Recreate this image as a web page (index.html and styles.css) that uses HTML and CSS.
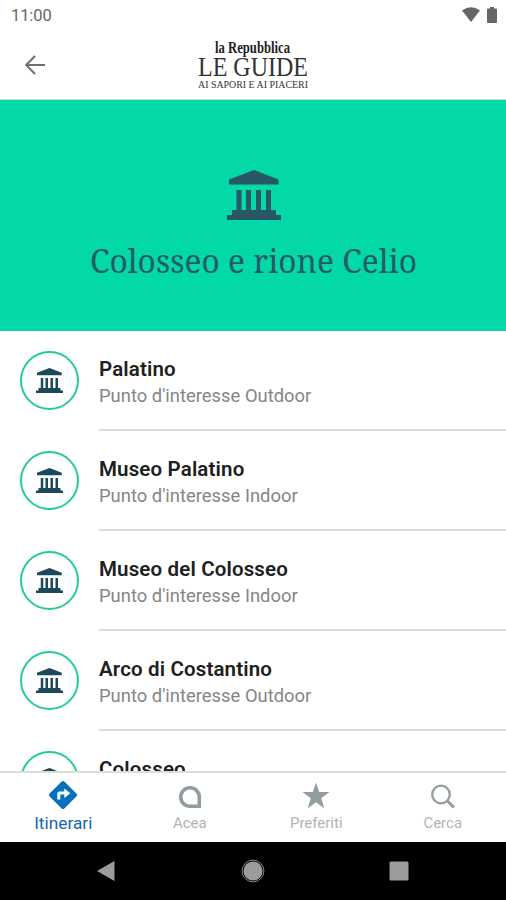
FILE: index.html
```html
<!DOCTYPE html>
<html lang="it">
<head>
  <meta charset="UTF-8" />
  <meta name="viewport" content="width=device-width, initial-scale=1.0"/>
  <title>Le Guide - Itinerari</title>
  <link rel="stylesheet" href="styles.css">
</head>
<body>
  <svg class="defs" width="0" height="0">
    <symbol id="museum" viewBox="0 0 54 50">
      <path d="M27 0L51.500 9.500V14.500H2V9.500ZM9.500 20h5v20h4.500V20h5v20h5V20h5v20h5V20h5v20h5v5h5v5H0v-5h5v-5h4.500Z"/>
    </symbol>
  </svg>

  <div class="screen">
    <!-- Status bar -->
    <div class="status">
      <span class="time">11:00</span>
      <div class="status-icons">
        <svg width="18" height="15" viewBox="0 0 18 15"><path d="M0 3.500Q9-3 18 3.500L9 15Z"/></svg>
        <svg width="10" height="16" viewBox="0 0 10 16"><path d="M3 0h4v1.500h2q1 0 1 1V15q0 1-1 1H1q-1 0-1-1V2.500q0-1 1-1h2Z"/></svg>
      </div>
    </div>

    <!-- Header -->
    <header class="header">
      <svg class="back" width="20" height="20" viewBox="0 0 20 20"><path d="M20 10H1.500M10 1L1.200 10L10 19"/></svg>
      <svg class="logo" width="112" height="56" viewBox="0 0 112 56">
        <text class="logo-paper" x="18" y="14.500" textLength="75" lengthAdjust="spacingAndGlyphs">la Repubblica</text>
        <text class="logo-name" x="1" y="38" textLength="110" lengthAdjust="spacingAndGlyphs">LE GUIDE</text>
        <text class="logo-sub" x="1" y="49.500" textLength="110" lengthAdjust="spacingAndGlyphs">AI SAPORI E AI PIACERI</text>
      </svg>
    </header>

    <!-- Itinerary title -->
    <div class="hero">
      <svg class="hero-icon"><use href="#museum"/></svg>
      <svg class="hero-title" width="332" height="50" viewBox="0 0 332 50">
        <text x="3" y="35" textLength="327" lengthAdjust="spacingAndGlyphs">Colosseo e rione Celio</text>
      </svg>
    </div>

    <!-- Places -->
    <div class="list">
      <div class="item">
        <div class="circle"><svg><use href="#museum"/></svg></div>
        <div class="info"><h2>Palatino</h2><p>Punto d'interesse Outdoor</p></div>
      </div>
      <div class="item">
        <div class="circle"><svg><use href="#museum"/></svg></div>
        <div class="info"><h2>Museo Palatino</h2><p>Punto d'interesse Indoor</p></div>
      </div>
      <div class="item">
        <div class="circle"><svg><use href="#museum"/></svg></div>
        <div class="info"><h2>Museo del Colosseo</h2><p>Punto d'interesse Indoor</p></div>
      </div>
      <div class="item">
        <div class="circle"><svg><use href="#museum"/></svg></div>
        <div class="info"><h2>Arco di Costantino</h2><p>Punto d'interesse Outdoor</p></div>
      </div>
      <div class="item">
        <div class="circle"><svg><use href="#museum"/></svg></div>
        <div class="info"><h2>Colosseo</h2></div>
      </div>
    </div>

    <!-- Tabs -->
    <nav class="tabs">
      <div class="tab active">
        <svg width="28" height="28" viewBox="0 0 28 28">
          <path d="M12.600.6q1.400-1.200 2.800 0l12 12q1.200 1.400 0 2.800l-12 12q-1.400 1.200-2.800 0l-12-12q-1.200-1.400 0-2.800Z"/>
          <path class="arrow" d="M8.300 18.500v-5.500q0-2.500 2.500-2.500h4.500V7.500l6 4.800-6 4.800V13.500h-4v5Z"/>
        </svg>
        <span>Itinerari</span>
      </div>
      <div class="tab">
        <svg width="28" height="28" viewBox="0 0 28 28"><path class="line acea" d="M23.300 25.300H14A9.300 9.300 0 1 1 23.300 16Z"/></svg>
        <span>Acea</span>
      </div>
      <div class="tab">
        <svg width="28" height="28" viewBox="0 0 28 28"><path d="M14 1.500l3.200 9.500 10.300.1-8.300 6.100 3.200 10.300-8.400-6.200L5.600 27.500l3.200-10.300L.5 11.100l10.300-.1Z"/></svg>
        <span>Preferiti</span>
      </div>
      <div class="tab">
        <svg width="28" height="28" viewBox="0 0 28 28"><circle class="line" cx="12" cy="13.500" r="8.800"/><path class="line handle" d="M18 19.500L25 26.500"/></svg>
        <span>Cerca</span>
      </div>
    </nav>

    <!-- Android navigation -->
    <div class="android">
      <svg width="20" height="22" viewBox="0 0 20 22"><path d="M18.500 1v20L1 11Z"/></svg>
      <svg width="24" height="24" viewBox="0 0 24 24"><circle cx="12" cy="12" r="9.500"/><circle class="ring" cx="12" cy="12" r="10.900"/></svg>
      <svg width="20" height="20" viewBox="0 0 20 20"><rect x=".5" y=".5" width="19" height="19" rx="1.500"/></svg>
    </div>
  </div>
</body>
</html>
```
FILE: styles.css
```css
* { box-sizing: border-box; }
body { font-family: Roboto, "Liberation Sans", sans-serif; background: #fff; margin: 0; }
svg { display: block; }
h2, p { margin: 0; font-weight: normal; }
.defs { position: absolute; }
.screen { height: 900px; display: flex; flex-direction: column; overflow: hidden; }

.status { height: 32px; flex: none; display: flex; justify-content: space-between; padding: 0 9px 0 11px; color: #666; }
.time { font-size: 16.5px; line-height: 32px; letter-spacing: -.1px; }
.status-icons { display: flex; gap: 7px; padding-top: 7px; fill: #666; }

.header { height: 68px; flex: none; display: grid; grid-template-columns: 1fr 112px 1fr; align-items: center; border-bottom: 1px solid #c5ddd6; }
.back { margin: 0 0 2px 25px; fill: none; stroke: #707070; stroke-width: 2; }
.logo { font-family: "Liberation Serif", serif; overflow: visible; }
.logo-paper { font-size: 16px; font-weight: bold; fill: #222; }
.logo-name { font-size: 27px; fill: #333; }
.logo-sub { font-size: 9.5px; fill: #333; }

.hero { height: 231px; flex: none; background: #02d9a7; display: flex; flex-direction: column; align-items: center; padding-top: 70px; }
.hero-icon { width: 54px; height: 50px; margin-left: 1px; fill: #285766; }
.hero-title { margin-top: 18px; overflow: visible; font-family: "Noto Serif", "DejaVu Serif Condensed", "DejaVu Serif", serif; font-size: 32px; fill: #245b66; }

.list { flex: 1; min-height: 0; overflow: hidden; }
.item { height: 100px; display: flex; padding-left: 20px; }
.circle { width: 59px; height: 59px; margin: 20px 20px 0 0; flex: none; border: 2px solid #22cd95; border-radius: 50%; display: flex; align-items: center; justify-content: center; }
.circle svg { width: 27px; height: 25px; fill: #1c485b; }
.info { flex: 1; padding-top: 25px; border-bottom: 2px solid #dcdcdc; }
.info h2 { font-size: 20.5px; line-height: 27px; font-weight: 600; letter-spacing: .15px; color: #202020; }
.info p { font-size: 18.400px; line-height: 26px; color: #858585; }

.tabs { height: 71px; flex: none; display: flex; border-top: 2px solid #dcdcdc; background: #fff; }
.tab { flex: 1; display: flex; flex-direction: column; align-items: center; padding-top: 8px; color: #b0b4b6; fill: #929da1; font-size: 15px; line-height: 28px; }
.tab.active { color: #1767b0; fill: #0870bd; font-size: 17.300px; }
.tab .arrow { fill: #fff; }
.line { fill: none; stroke: #929da1; stroke-width: 2.300; }
.acea { stroke-width: 3.600; }
.handle { stroke-width: 3; }

.android { height: 58px; flex: none; background: #000; display: flex; align-items: center; justify-content: space-between; padding: 0 97px 0 96px; fill: #9c9c9c; }
.ring { fill: none; stroke: #8a8a8a; stroke-width: 1; }
```
